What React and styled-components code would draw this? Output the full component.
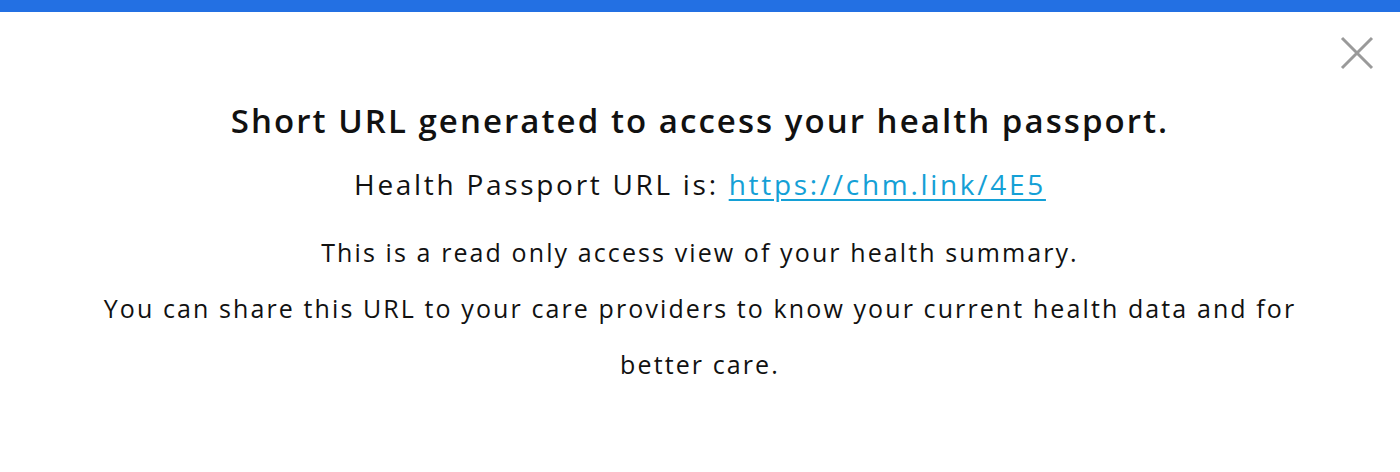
import React from 'react'
import styled, { createGlobalStyle } from 'styled-components'

const GlobalStyle = createGlobalStyle`
  body {
    margin: 0;
    background: #fff;
    font-family: "Open Sans", Lato, sans-serif;
    color: #111;
  }
`

const Page = styled.div`
  width: 100%;
  height: 472px;
  background: #fff;
  position: relative;
`

const TopBar = styled.div`
  height: 12px;
  background: #2370e3;
`

const CloseButton = styled.button`
  position: absolute;
  top: 36px;
  right: 26px;
  width: 34px;
  height: 34px;
  padding: 0;
  border: none;
  background: none;
  cursor: pointer;
  display: flex;
  align-items: center;
  justify-content: center;
`

const Body = styled.div`
  display: flex;
  flex-direction: column;
  align-items: center;
  padding: 86px 100px 0;
  text-align: center;
`

const Title = styled.h2`
  margin: 0;
  font-size: 33px;
  font-weight: 600;
  letter-spacing: 2.05px;
  line-height: 46px;
  color: #111;
`

const UrlLine = styled.p`
  margin: 20px 0 0;
  font-size: 28px;
  letter-spacing: 2.7px;
  line-height: 40px;
`

const Link = styled.a`
  color: #14a0d6;
  text-decoration: underline;
  text-decoration-thickness: 2px;
  text-underline-offset: 4px;
`

const Text = styled.p`
  margin: ${p => p.$first ? '20px' : '0'} 0 0;
  max-width: ${p => p.$wide ? '1200px' : 'none'};
  font-size: 25px;
  letter-spacing: 2.1px;
  line-height: 56px;
`

export default function App() {
  return (
    <Page>
      <GlobalStyle />
      <TopBar />
      <CloseButton aria-label="Close">
        <svg width="34" height="34" viewBox="0 0 34 34">
          <path d="M2 2 L32 32 M32 2 L2 32" stroke="#9a9a9a" strokeWidth="3" />
        </svg>
      </CloseButton>
      <Body>
        <Title>Short URL generated to access your health passport.</Title>
        <UrlLine>
          Health Passport URL is: <Link href="#">https://chm.link/4E5</Link>
        </UrlLine>
        <Text $first>This is a read only access view of your health summary.</Text>
        <Text $wide>
          You can share this URL to your care providers to know your current health data and for better care.
        </Text>
      </Body>
    </Page>
  )
}
